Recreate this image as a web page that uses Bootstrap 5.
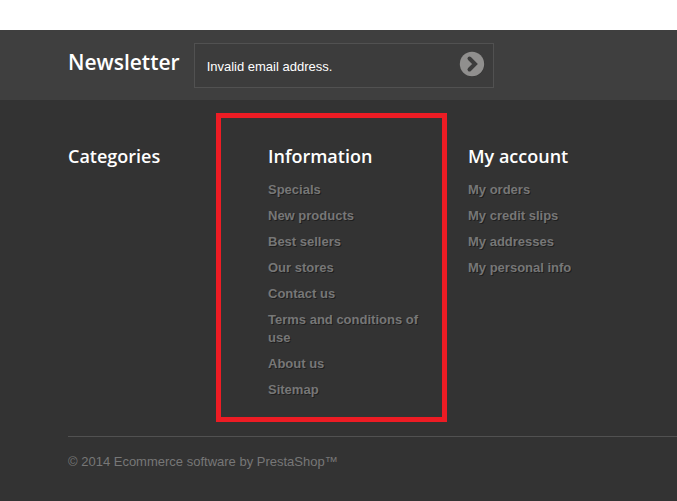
<!DOCTYPE html>
<html lang="en">
<head>
<meta charset="utf-8">
<meta name="viewport" content="width=device-width, initial-scale=1">
<title>Store footer</title>
<link href="https://cdn.jsdelivr.net/npm/bootstrap@5.3.0/dist/css/bootstrap.min.css" rel="stylesheet">
<style>
body { font-family: "Liberation Sans", Arial, sans-serif; font-size: 13px; line-height: 18px; background: #fff; }
.store-footer { margin-top: 30px; background: #333; color: #777; padding-bottom: 24px; min-height: calc(100vh - 30px); }
.indent { padding-left: 68px; }
.newsletter { background: #3f3f3f; min-height: 70px; gap: 14px; }
.newsletter-title, .block-title { font-family: "Open Sans", sans-serif; font-weight: 600; color: #fff; margin: 0; }
.newsletter-title { font-size: 21px; line-height: 25px; margin-bottom: 6px; }
.newsletter-box { width: 300px; height: 45px; background: #3c3c3c; border: 1px solid #515151; padding: 0 8px 0 12px; }
.newsletter-box input { font-size: 13px; color: #fff; margin-top: 3px; }
.newsletter-box button { line-height: 0; margin-bottom: 2px; }
.link-columns { padding-top: 44px; }
.link-column { flex: 0 1 200px; }
.block-title { font-size: 18px; line-height: 25px; margin-bottom: 12px; }
.link-list { display: grid; gap: 8px; padding-right: 30px; margin: 0; }
.link-list a { display: block; color: #777; font-weight: 700; text-decoration: none; text-shadow: 1px 1px 0 rgba(0, 0, 0, .4); }
.link-list a:hover { color: #fff; }
.highlight::after { content: ""; position: absolute; inset: -31px 21px -23px -52px; border: 5px solid #ed1c24; pointer-events: none; }
.copyright { border-top: 1px solid #515151; margin: 37px 0 0 68px; padding-top: 16px; }
</style>
<script src="https://cdn.jsdelivr.net/npm/bootstrap@5.3.0/dist/js/bootstrap.bundle.min.js"></script>
</head>
<body>
<footer class="store-footer">
  <form class="newsletter indent d-flex align-items-center">
    <h4 class="newsletter-title"><label for="email">Newsletter</label></h4>
    <div class="newsletter-box d-flex align-items-center">
      <input class="flex-grow-1 bg-transparent border-0 p-0" id="email" type="text" value="Invalid email address.">
      <button class="btn p-0 border-0" type="submit" aria-label="Subscribe">
        <svg width="26" height="26" viewBox="0 0 26 26" aria-hidden="true">
          <circle cx="13.5" cy="13.5" r="12" fill="#303030"/>
          <circle cx="13" cy="13" r="12.2" fill="#908f8e"/>
          <path d="M10.5 7.5 L16 13 L10.5 18.5" fill="none" stroke="#3c3c3c" stroke-width="4" stroke-linecap="round" stroke-linejoin="miter"/>
        </svg>
      </button>
    </div>
  </form>

  <div class="link-columns indent d-flex">
    <section class="link-column">
      <h4 class="block-title">Categories</h4>
    </section>
    <section class="link-column highlight position-relative">
      <h4 class="block-title">Information</h4>
      <ul class="link-list list-unstyled">
        <li><a href="#">Specials</a></li>
        <li><a href="#">New products</a></li>
        <li><a href="#">Best sellers</a></li>
        <li><a href="#">Our stores</a></li>
        <li><a href="#">Contact us</a></li>
        <li><a href="#">Terms and conditions of use</a></li>
        <li><a href="#">About us</a></li>
        <li><a href="#">Sitemap</a></li>
      </ul>
    </section>
    <section class="link-column">
      <h4 class="block-title">My account</h4>
      <ul class="link-list list-unstyled">
        <li><a href="#">My orders</a></li>
        <li><a href="#">My credit slips</a></li>
        <li><a href="#">My addresses</a></li>
        <li><a href="#">My personal info</a></li>
      </ul>
    </section>
  </div>

  <div class="copyright">© 2014 Ecommerce software by PrestaShop™</div>
</footer>
</body>
</html>
